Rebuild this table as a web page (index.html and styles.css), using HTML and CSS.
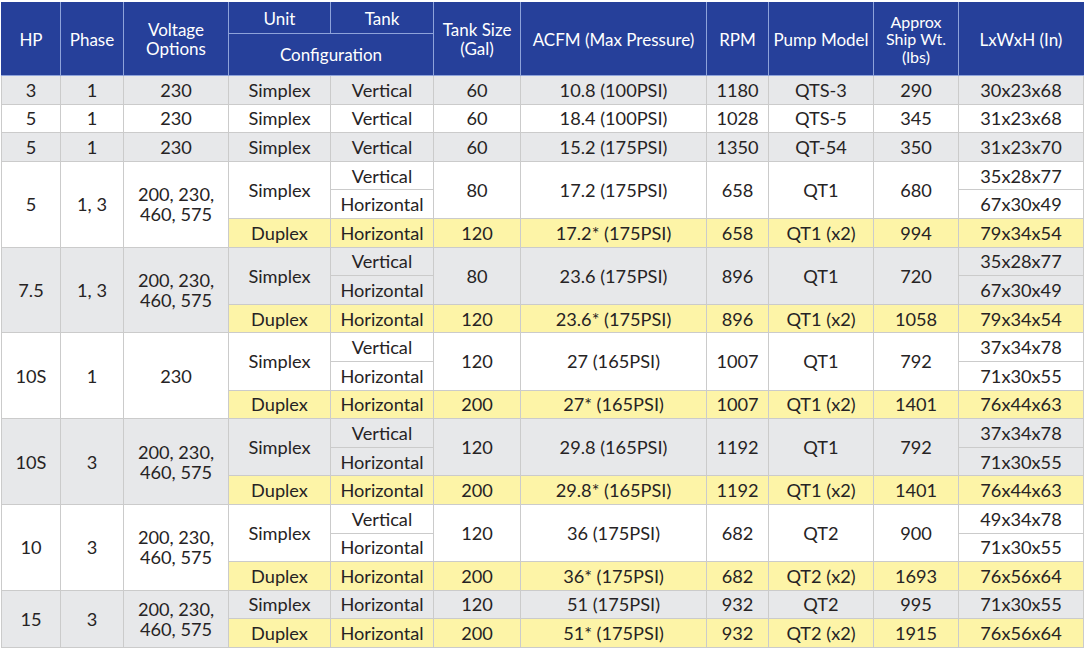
FILE: index.html
```html
<!DOCTYPE html>
<html>
<head>
<meta charset="utf-8">
<link rel="stylesheet" href="styles.css">
</head>
<body>
<div class="wrap">
<table class="spec">
<colgroup>
<col class="c-hp"><col class="c-ph"><col class="c-volt"><col class="c-unit"><col class="c-tank"><col class="c-size"><col class="c-acfm"><col class="c-rpm"><col class="c-pump"><col class="c-wt"><col class="c-dim">
</colgroup>
<thead>
<tr class="h1">
<th rowspan="2">HP</th>
<th rowspan="2">Phase</th>
<th rowspan="2">Voltage<br>Options</th>
<th>Unit</th>
<th>Tank</th>
<th rowspan="2">Tank Size<br>(Gal)</th>
<th rowspan="2">ACFM (Max Pressure)</th>
<th rowspan="2">RPM</th>
<th rowspan="2">Pump Model</th>
<th rowspan="2" class="tight">Approx<br>Ship Wt.<br>(lbs)</th>
<th rowspan="2">LxWxH (In)</th>
</tr>
<tr class="h2">
<th colspan="2">Configuration</th>
</tr>
</thead>
<tbody>
<tr class="g"><td>3</td><td>1</td><td>230</td><td>Simplex</td><td>Vertical</td><td>60</td><td>10.8 (100PSI)</td><td>1180</td><td>QTS-3</td><td>290</td><td>30x23x68</td></tr>
<tr class="w"><td>5</td><td>1</td><td>230</td><td>Simplex</td><td>Vertical</td><td>60</td><td>18.4 (100PSI)</td><td>1028</td><td>QTS-5</td><td>345</td><td>31x23x68</td></tr>
<tr class="g"><td>5</td><td>1</td><td>230</td><td>Simplex</td><td>Vertical</td><td>60</td><td>15.2 (175PSI)</td><td>1350</td><td>QT-54</td><td>350</td><td>31x23x70</td></tr>

<tr class="w"><td rowspan="3">5</td><td rowspan="3">1, 3</td><td rowspan="3">200, 230,<br>460, 575</td><td rowspan="2">Simplex</td><td>Vertical</td><td rowspan="2">80</td><td rowspan="2">17.2 (175PSI)</td><td rowspan="2">658</td><td rowspan="2">QT1</td><td rowspan="2">680</td><td>35x28x77</td></tr>
<tr class="w"><td>Horizontal</td><td>67x30x49</td></tr>
<tr class="y"><td>Duplex</td><td>Horizontal</td><td>120</td><td>17.2* (175PSI)</td><td>658</td><td>QT1 (x2)</td><td>994</td><td>79x34x54</td></tr>

<tr class="g"><td rowspan="3">7.5</td><td rowspan="3">1, 3</td><td rowspan="3">200, 230,<br>460, 575</td><td rowspan="2">Simplex</td><td>Vertical</td><td rowspan="2">80</td><td rowspan="2">23.6 (175PSI)</td><td rowspan="2">896</td><td rowspan="2">QT1</td><td rowspan="2">720</td><td>35x28x77</td></tr>
<tr class="g"><td>Horizontal</td><td>67x30x49</td></tr>
<tr class="y"><td>Duplex</td><td>Horizontal</td><td>120</td><td>23.6* (175PSI)</td><td>896</td><td>QT1 (x2)</td><td>1058</td><td>79x34x54</td></tr>

<tr class="w"><td rowspan="3">10S</td><td rowspan="3">1</td><td rowspan="3">230</td><td rowspan="2">Simplex</td><td>Vertical</td><td rowspan="2">120</td><td rowspan="2">27 (165PSI)</td><td rowspan="2">1007</td><td rowspan="2">QT1</td><td rowspan="2">792</td><td>37x34x78</td></tr>
<tr class="w"><td>Horizontal</td><td>71x30x55</td></tr>
<tr class="y"><td>Duplex</td><td>Horizontal</td><td>200</td><td>27* (165PSI)</td><td>1007</td><td>QT1 (x2)</td><td>1401</td><td>76x44x63</td></tr>

<tr class="g"><td rowspan="3">10S</td><td rowspan="3">3</td><td rowspan="3">200, 230,<br>460, 575</td><td rowspan="2">Simplex</td><td>Vertical</td><td rowspan="2">120</td><td rowspan="2">29.8 (165PSI)</td><td rowspan="2">1192</td><td rowspan="2">QT1</td><td rowspan="2">792</td><td>37x34x78</td></tr>
<tr class="g"><td>Horizontal</td><td>71x30x55</td></tr>
<tr class="y"><td>Duplex</td><td>Horizontal</td><td>200</td><td>29.8* (165PSI)</td><td>1192</td><td>QT1 (x2)</td><td>1401</td><td>76x44x63</td></tr>

<tr class="w"><td rowspan="3">10</td><td rowspan="3">3</td><td rowspan="3">200, 230,<br>460, 575</td><td rowspan="2">Simplex</td><td>Vertical</td><td rowspan="2">120</td><td rowspan="2">36 (175PSI)</td><td rowspan="2">682</td><td rowspan="2">QT2</td><td rowspan="2">900</td><td>49x34x78</td></tr>
<tr class="w"><td>Horizontal</td><td>71x30x55</td></tr>
<tr class="y"><td>Duplex</td><td>Horizontal</td><td>200</td><td>36* (175PSI)</td><td>682</td><td>QT2 (x2)</td><td>1693</td><td>76x56x64</td></tr>

<tr class="g"><td rowspan="2">15</td><td rowspan="2">3</td><td rowspan="2">200, 230,<br>460, 575</td><td>Simplex</td><td>Horizontal</td><td>120</td><td>51 (175PSI)</td><td>932</td><td>QT2</td><td>995</td><td>71x30x55</td></tr>
<tr class="y"><td>Duplex</td><td>Horizontal</td><td>200</td><td>51* (175PSI)</td><td>932</td><td>QT2 (x2)</td><td>1915</td><td>76x56x64</td></tr>
</tbody>
</table>
</div>
</body>
</html>
```

FILE: styles.css
```css
html, body {
  margin: 0;
  padding: 0;
  background: #ffffff;
}

.wrap {
  padding: 2px 0 0 1px;
}

.spec {
  border-collapse: collapse;
  table-layout: fixed;
  width: 1082px;
  font-family: Lato, "Open Sans", "Liberation Sans", sans-serif;
  font-size: 18.2px;
  color: #262324;
}

.c-hp { width: 59px; }
.c-ph { width: 63px; }
.c-volt { width: 105px; }
.c-unit { width: 102px; }
.c-tank { width: 103px; }
.c-size { width: 87px; }
.c-acfm { width: 186px; }
.c-rpm { width: 62px; }
.c-pump { width: 105px; }
.c-wt { width: 85px; }
.c-dim { width: 125px; }

.spec th {
  background: #26409a;
  color: #ffffff;
  font-weight: normal;
  font-size: 17px;
  line-height: 19px;
  border: 1px solid #8ea3da;
  padding: 0;
  text-align: center;
  vertical-align: middle;
}

.spec thead tr:first-child th {
  border-top-color: #26409a;
}

.spec th:first-child {
  border-left-color: #26409a;
}

.spec th:last-child {
  border-right-color: #26409a;
}

.spec .h1 { height: 31px; }
.spec .h2 { height: 42px; }

.spec th.tight {
  font-size: 16px;
  line-height: 17.5px;
}

.spec td {
  border: 1px solid #cbcbcb;
  padding: 0;
  text-align: center;
  vertical-align: middle;
  line-height: 20px;
  height: 27.6px;
}

.spec tr.g td { background: #e7e8ea; }
.spec tr.w td { background: #ffffff; }
.spec tr.y td { background: #fdf4a7; }
```
